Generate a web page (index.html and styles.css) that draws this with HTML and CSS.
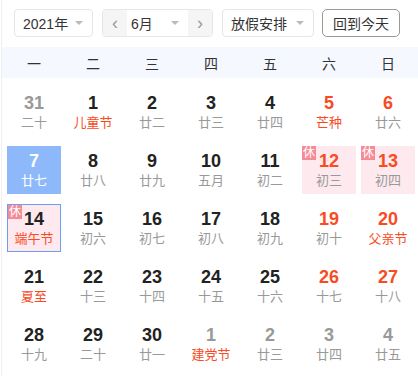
FILE: index.html
```html
<!DOCTYPE html>
<html lang="zh-CN">
<head>
    <meta charset="UTF-8">
    <meta name="viewport" content="width=device-width, initial-scale=1.0">
    <title>万年历</title>
    <link rel="stylesheet" href="styles.css">
</head>
<body>
    <div class="calendar">
        <div class="toolbar">
            <div class="select year-select">2021年<span class="caret"></span></div>
            <div class="month-group">
                <span class="nav-btn">&lsaquo;</span>
                <div class="month-select">6月<span class="caret"></span></div>
                <span class="nav-btn">&rsaquo;</span>
            </div>
            <div class="select holiday-select">放假安排<span class="caret"></span></div>
            <button class="today-btn">回到今天</button>
        </div>

        <div class="week">
            <span>一</span><span>二</span><span>三</span><span>四</span><span>五</span><span>六</span><span>日</span>
        </div>

        <div class="days">
            <div class="day other"><b>31</b><i>二十</i></div>
            <div class="day"><b>1</b><i class="red">儿童节</i></div>
            <div class="day"><b>2</b><i>廿二</i></div>
            <div class="day"><b>3</b><i>廿三</i></div>
            <div class="day"><b>4</b><i>廿四</i></div>
            <div class="day weekend"><b>5</b><i class="red">芒种</i></div>
            <div class="day weekend"><b>6</b><i>廿六</i></div>

            <div class="day selected"><b>7</b><i>廿七</i></div>
            <div class="day"><b>8</b><i>廿八</i></div>
            <div class="day"><b>9</b><i>廿九</i></div>
            <div class="day"><b>10</b><i>五月</i></div>
            <div class="day"><b>11</b><i>初二</i></div>
            <div class="day weekend rest"><span class="badge">休</span><b>12</b><i>初三</i></div>
            <div class="day weekend rest"><span class="badge">休</span><b>13</b><i>初四</i></div>

            <div class="day rest today"><span class="badge">休</span><b>14</b><i class="red">端午节</i></div>
            <div class="day"><b>15</b><i>初六</i></div>
            <div class="day"><b>16</b><i>初七</i></div>
            <div class="day"><b>17</b><i>初八</i></div>
            <div class="day"><b>18</b><i>初九</i></div>
            <div class="day weekend"><b>19</b><i>初十</i></div>
            <div class="day weekend"><b>20</b><i class="red">父亲节</i></div>

            <div class="day"><b>21</b><i class="red">夏至</i></div>
            <div class="day"><b>22</b><i>十三</i></div>
            <div class="day"><b>23</b><i>十四</i></div>
            <div class="day"><b>24</b><i>十五</i></div>
            <div class="day"><b>25</b><i>十六</i></div>
            <div class="day weekend"><b>26</b><i>十七</i></div>
            <div class="day weekend"><b>27</b><i>十八</i></div>

            <div class="day"><b>28</b><i>十九</i></div>
            <div class="day"><b>29</b><i>二十</i></div>
            <div class="day"><b>30</b><i>廿一</i></div>
            <div class="day other"><b>1</b><i class="red">建党节</i></div>
            <div class="day other"><b>2</b><i>廿三</i></div>
            <div class="day other"><b>3</b><i>廿四</i></div>
            <div class="day other"><b>4</b><i>廿五</i></div>
        </div>
    </div>
</body>
</html>
```

FILE: styles.css
```css
body {
    margin: 0;
    background-color: #fff;
    color: #333;
    font-family: "Liberation Sans", "Noto Sans CJK SC", sans-serif;
}

.calendar {
    margin-left: 1px;
    border-left: 1px solid #f0f0f0;
    height: 376px;
}

.toolbar {
    display: flex;
    align-items: center;
    padding: 9px 0 0 12px;
    font-size: 14px;
}

.select, .month-group {
    box-sizing: border-box;
    height: 28px;
    border: 1px solid #e6e6e6;
    border-radius: 4px;
    display: flex;
    align-items: center;
}

.select {
    position: relative;
    padding-left: 8px;
}

.year-select {
    width: 79px;
}

.holiday-select {
    width: 92px;
    margin-left: 9px;
}

.caret {
    position: absolute;
    right: 9px;
    top: 11px;
    width: 0;
    height: 0;
    border-left: 4px solid transparent;
    border-right: 4px solid transparent;
    border-top: 4px solid #bbb;
}

.month-group {
    width: 111px;
    margin-left: 9px;
    overflow: hidden;
}

.nav-btn {
    width: 24px;
    height: 100%;
    background-color: #f5f5f5;
    color: #999;
    font-size: 18px;
    display: flex;
    align-items: center;
    justify-content: center;
}

.month-select {
    position: relative;
    flex: 1;
    height: 100%;
    display: flex;
    align-items: center;
    padding-left: 4px;
}

.today-btn {
    margin-left: 8px;
    width: 78px;
    height: 28px;
    border: 1px solid #999;
    border-radius: 5px;
    background-color: #fff;
    color: #333;
    font-family: "Liberation Sans", "Noto Sans CJK SC", sans-serif;
    font-size: 14px;
    padding: 0;
}

.week, .days {
    display: grid;
    grid-template-columns: repeat(7, 54px);
    column-gap: 5px;
    padding-left: 5px;
}

.week {
    margin-top: 10px;
    height: 31px;
    align-items: center;
    background-color: #f5f8fe;
    font-size: 14px;
    color: #333;
    justify-items: center;
}

.days {
    padding-top: 10px;
    row-gap: 10px;
    grid-auto-rows: 48px;
}

.day {
    position: relative;
    box-sizing: border-box;
    display: flex;
    flex-direction: column;
    align-items: center;
    padding-top: 4px;
}

.day b {
    font-size: 18px;
    line-height: 22px;
    color: #222;
}

.day i {
    font-style: normal;
    font-size: 13px;
    line-height: 18px;
    color: #999;
}

.day i.red, .weekend b {
    color: #f94b1f;
}

.other b {
    color: #999;
}

.selected {
    background-color: #8db9fb;
}

.selected b, .selected i {
    color: #fff;
}

.rest {
    background-color: #fde9ee;
}

.today {
    border: 1px solid #6d9ef1;
    padding-top: 3px;
}

.badge {
    position: absolute;
    left: 0;
    top: 0;
    width: 14px;
    height: 14px;
    background-color: #f68b98;
    color: #fff;
    font-size: 12px;
    line-height: 14px;
    text-align: center;
}

.today .badge {
    left: -1px;
    top: -1px;
    margin: 1px 0 0 1px;
}
```
